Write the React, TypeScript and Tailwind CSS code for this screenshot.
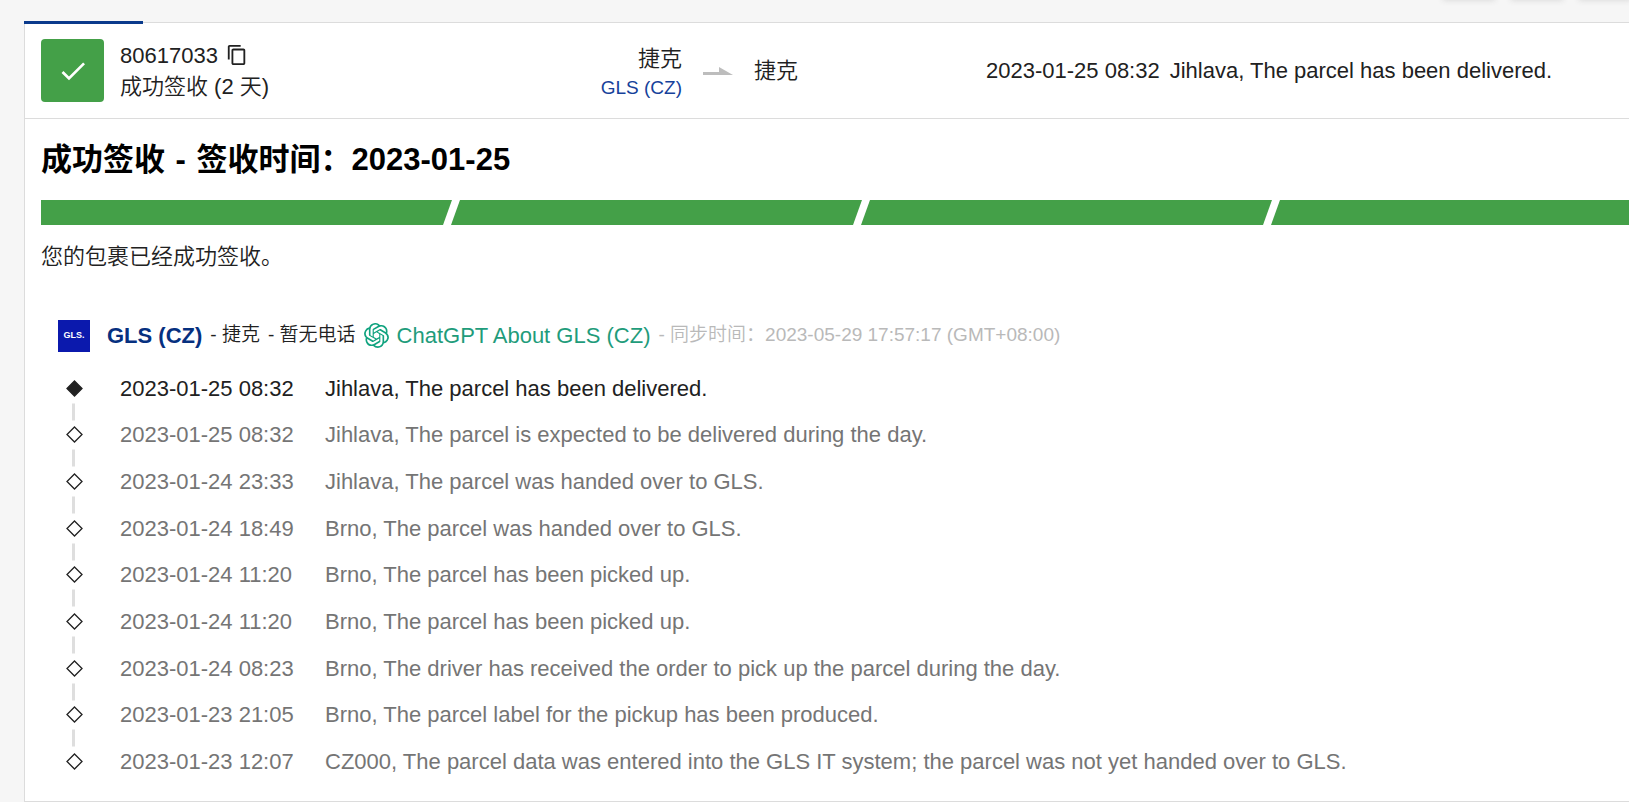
import { MdCheck, MdContentCopy } from "react-icons/md";
import { SiOpenai } from "react-icons/si";

type TrackEvent = {
  time: string;
  text: string;
};

const events: TrackEvent[] = [
  { time: "2023-01-25 08:32", text: "Jihlava, The parcel has been delivered." },
  { time: "2023-01-25 08:32", text: "Jihlava, The parcel is expected to be delivered during the day." },
  { time: "2023-01-24 23:33", text: "Jihlava, The parcel was handed over to GLS." },
  { time: "2023-01-24 18:49", text: "Brno, The parcel was handed over to GLS." },
  { time: "2023-01-24 11:20", text: "Brno, The parcel has been picked up." },
  { time: "2023-01-24 11:20", text: "Brno, The parcel has been picked up." },
  { time: "2023-01-24 08:23", text: "Brno, The driver has received the order to pick up the parcel during the day." },
  { time: "2023-01-23 21:05", text: "Brno, The parcel label for the pickup has been produced." },
  {
    time: "2023-01-23 12:07",
    text: "CZ000, The parcel data was entered into the GLS IT system; the parcel was not yet handed over to GLS.",
  },
];

const RouteArrow = () => (
  <svg className="h-2 w-[30px]" viewBox="0 0 30 8" aria-hidden="true">
    <path d="M0 5h16V0l14 8H0z" fill="#bdbdbd" />
  </svg>
);

const Diamond = ({ filled }: { filled: boolean }) => (
  <svg className="size-[17px]" viewBox="0 0 17 17" aria-hidden="true">
    <path d="M8.5 1l7.5 7.5-7.5 7.5L1 8.5z" fill={filled ? "#212121" : "#fff"} stroke="#212121" strokeWidth={1.3} />
  </svg>
);

const ResultHeader = () => (
  <header className="grid grid-cols-[641fr_72px_232fr_643fr] items-center border-b border-[#dcdcdc] py-4 pl-4">
    <div className="flex items-center justify-between">
      <div className="flex items-center gap-4">
        <div className="flex size-[63px] items-center justify-center rounded bg-[#44a048] text-white">
          <MdCheck className="size-8" />
        </div>
        <div className="leading-[31px]">
          <div className="flex items-center gap-2">
            <span>80617033</span>
            <button className="cursor-pointer" type="button" aria-label="复制单号">
              <MdContentCopy className="size-[22px]" />
            </button>
          </div>
          <p>成功签收 (2 天)</p>
        </div>
      </div>
      <div className="pt-1 text-right leading-[29px]">
        <p>捷克</p>
        <a className="block text-[19px] text-[#16419a]" href="#gls">
          GLS (CZ)
        </a>
      </div>
    </div>
    <div className="flex justify-center">
      <RouteArrow />
    </div>
    <p>捷克</p>
    <p className="flex gap-[10px] whitespace-nowrap">
      <time>2023-01-25 08:32</time>
      <span>Jihlava, The parcel has been delivered.</span>
    </p>
  </header>
);

const ProgressBar = () => (
  <div className="overflow-hidden">
    <div className="-mr-[53px] flex h-[25px] -space-x-px">
      <div className="flex-1 bg-[#44a048] [clip-path:polygon(0_0,100%_0,calc(100%-9px)_100%,0_100%)]" />
      <div className="flex-1 bg-[#44a048] [clip-path:polygon(9px_0,100%_0,calc(100%-9px)_100%,0_100%)]" />
      <div className="flex-1 bg-[#44a048] [clip-path:polygon(9px_0,100%_0,calc(100%-9px)_100%,0_100%)]" />
      <div className="flex-1 bg-[#44a048] [clip-path:polygon(9px_0,100%_0,100%_100%,0_100%)]" />
    </div>
  </div>
);

const CarrierLine = () => (
  <div className="flex items-center pl-[33px] whitespace-nowrap" id="gls">
    <div className="flex size-8 items-center justify-center bg-[#0b19ad] text-[9px] font-black text-white">GLS.</div>
    <a className="ml-[17px] font-bold text-[#06307f]" href="#gls">
      GLS (CZ)
    </a>
    <span className="ml-2 text-[19px]">- 捷克</span>
    <span className="ml-2 text-[19px]">- 暂无电话</span>
    <a className="ml-2 flex items-center gap-2 text-[#1f9c7b]" href="#chatgpt">
      <SiOpenai className="size-[25px] text-[#10a37f]" />
      ChatGPT About GLS (CZ)
    </a>
    <span className="ml-2 text-[19px] text-[#b9b9b9]">- 同步时间：2023-05-29 17:57:17 (GMT+08:00)</span>
  </div>
);

const Timeline = () => (
  <ol className="mt-[13px] grid flex-1 auto-rows-fr">
    {events.map((event, index) => (
      <li
        className={`relative flex items-center pl-[41px] whitespace-nowrap ${index === 0 ? "" : "text-[#757575]"}`}
        key={index}
      >
        <Diamond filled={index === 0} />
        <time className="ml-[37px] w-[205px]">{event.time}</time>
        <span>{event.text}</span>
        {index < events.length - 1 && (
          <span className="absolute bottom-0 left-[47px] h-[17px] w-[3px] translate-y-1/2 bg-[#dedede]" />
        )}
      </li>
    ))}
  </ol>
);

export default function App() {
  return (
    <div className="flex min-h-screen flex-col overflow-hidden bg-[#f6f6f6] pl-6 font-['Liberation_Sans','Noto_Sans_CJK_SC',sans-serif] text-[22px] font-[350] text-[#212121]">
      {/* Bottom shadows of the floating toolbar above */}
      <div className="flex h-[22px] justify-end gap-5">
        <div className="-mt-2 h-1 w-12 shadow-[0_2px_6px_2px_#d4d4d4]" />
        <div className="-mt-2 h-1 w-12 shadow-[0_2px_6px_2px_#d4d4d4]" />
        <div className="-mt-2 h-1 w-12 shadow-[0_2px_6px_2px_#d4d4d4]" />
      </div>

      <main className="relative flex flex-1 flex-col border-y border-l border-[#dcdcdc] bg-white">
        <div className="absolute -top-0.5 -left-px h-[3px] w-[119px] bg-[#0a3a8c]" />
        <ResultHeader />

        <section className="flex flex-1 flex-col pb-4">
          <div className="pl-4">
            <h1 className="mt-[21px] text-[31px] leading-10 font-bold text-black">
              成功签收<span className="mx-0.5"> - </span>签收时间：2023-01-25
            </h1>
            <div className="mt-5">
              <ProgressBar />
            </div>
            <p className="mt-4 leading-8">您的包裹已经成功签收。</p>
          </div>
          <div className="mt-[46px] flex flex-1 flex-col">
            <CarrierLine />
            <Timeline />
          </div>
        </section>
      </main>
    </div>
  );
}
